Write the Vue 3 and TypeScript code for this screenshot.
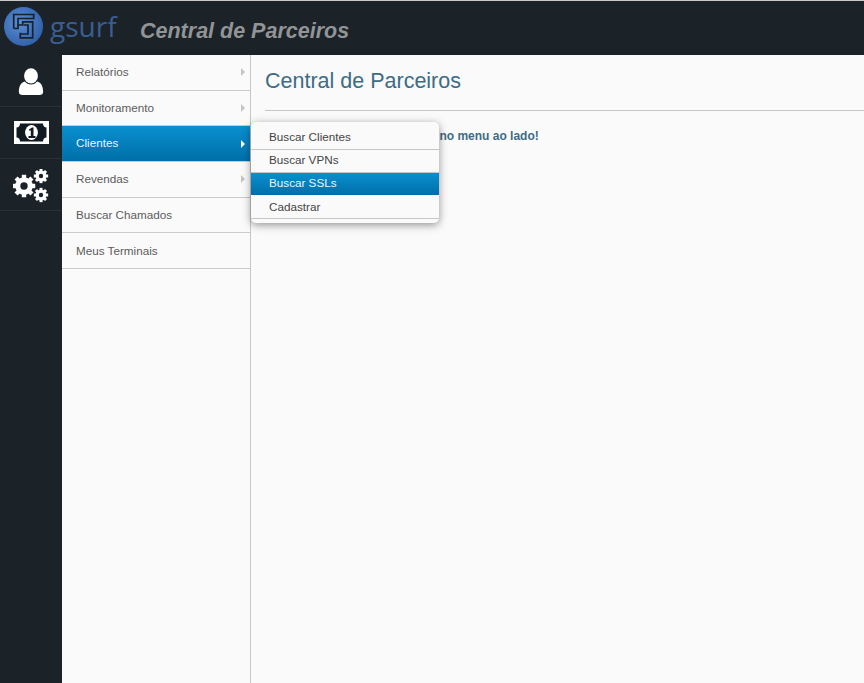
<script setup lang="ts">
const menu = [
  { label: 'Relatórios', arrow: true },
  { label: 'Monitoramento', arrow: true },
  { label: 'Clientes', arrow: true, active: true },
  { label: 'Revendas', arrow: true },
  { label: 'Buscar Chamados', arrow: false },
  { label: 'Meus Terminais', arrow: false },
]
const sub = [
  { label: 'Buscar Clientes' },
  { label: 'Buscar VPNs' },
  { label: 'Buscar SSLs', active: true },
  { label: 'Cadastrar' },
]
const gears = [
  { x: 11, y: 17, r: 8.8, hole: 3.7, w: 4.4, teeth: 8 },
  { x: 28, y: 7, r: 5.5, hole: 2.2, w: 3, teeth: 8 },
  { x: 28, y: 26, r: 5.5, hole: 2.2, w: 3, teeth: 8 },
]
function teeth(n: number) {
  return Array.from({ length: n }, (_, i) => (i * 360) / n)
}
</script>

<template>
  <div class="page">
    <header class="topbar">
      <svg class="logo" width="42" height="42" viewBox="0 0 42 42">
        <defs>
          <radialGradient id="ball" cx="40%" cy="40%" r="65%">
            <stop offset="0" stop-color="#5a8ed4" />
            <stop offset="1" stop-color="#3060a8" />
          </radialGradient>
        </defs>
        <circle cx="20.5" cy="20.5" r="19.5" fill="url(#ball)" />
        <g fill="none" stroke="#17222e" stroke-width="1.7">
          <path d="M10.7 22.5V8.5H30.7V12.5H15V19H19.7V15.8H29.7V31.8H17.3V26.8" />
          <path d="M10.7 22.5H15V19" />
          <path d="M20.7 19H25V28H17.3" />
        </g>
      </svg>
      <span class="brand">gsurf</span>
      <span class="app-title">Central de Parceiros</span>
    </header>

    <div class="body">
      <nav class="rail">
        <a class="rail-item user">
          <svg width="28" height="28" viewBox="0 0 28 30">
            <ellipse cx="14" cy="8.5" rx="7.4" ry="8.2" fill="#fff" />
            <path d="M1 25.5C1 20 3 15.5 7.5 14.5C9 16.5 11.2 17.6 14 17.6C16.8 17.6 19 16.5 20.5 14.5C25 15.5 27 20 27 25.5C27 28 25.5 29 23 29H5C2.5 29 1 28 1 25.5Z" fill="#fff" />
          </svg>
        </a>
        <a class="rail-item">
          <svg width="35" height="23" viewBox="0 0 35 23">
            <rect width="35" height="23" fill="#fff" />
            <path d="M6 2.5H29C29 5 30.5 6.5 32.5 6.5V16.5C30.5 16.5 29 18 29 20.5H6C6 18 4.5 16.5 2.5 16.5V6.5C4.5 6.5 6 5 6 2.5Z" fill="#111a20" />
            <ellipse cx="17.5" cy="11.5" rx="6.4" ry="7.6" fill="#fff" />
            <path d="M15 8.5L18 6.5H19.5V15H21.5V17H14.5V15H16.8V9.3L15.6 10Z" fill="#111a20" />
          </svg>
        </a>
        <a class="rail-item gears">
          <svg width="36" height="34" viewBox="0 0 36 34">
            <g v-for="(g, i) in gears" :key="i">
              <rect
                v-for="a in teeth(g.teeth)"
                :key="a"
                :x="g.x - g.w / 2"
                :y="g.y - g.r - g.w * 0.55"
                :width="g.w"
                :height="g.w * 1.1"
                fill="#fff"
                :transform="`rotate(${a} ${g.x} ${g.y})`"
              />
              <circle :cx="g.x" :cy="g.y" :r="(g.r + g.hole) / 2" fill="none" stroke="#fff" :stroke-width="g.r - g.hole" />
            </g>
          </svg>
        </a>
      </nav>

      <aside class="side">
        <ul class="menu">
          <li v-for="m in menu" :key="m.label" class="menu-item" :class="{ active: m.active }">
            <span>{{ m.label }}</span>
            <i v-if="m.arrow" class="caret"></i>
          </li>
        </ul>
      </aside>

      <main class="content">
        <h1>Central de Parceiros</h1>
        <hr />
        <p class="hint">Por favor, escolha uma opção no menu ao lado!</p>
      </main>

      <ul class="popup">
        <li v-for="s in sub" :key="s.label" :class="{ active: s.active }">{{ s.label }}</li>
      </ul>
    </div>
  </div>
</template>

<style>
html, body { margin: 0; background: #fafafa; }
</style>

<style scoped>
.page {
  width: 864px;
  height: 683px;
  display: flex;
  flex-direction: column;
  overflow: hidden;
  font-family: "Liberation Sans", Arial, sans-serif;
  background: #fafafa;
}
.topbar {
  height: 54px;
  flex: none;
  background: #1b2328;
  border-top: 1px solid #c9c9c9;
  display: flex;
  align-items: center;
  padding-left: 3px;
  box-sizing: content-box;
}
.logo { flex: none; margin-top: -3px; }
.brand {
  font-family: "Open Sans", sans-serif;
  font-weight: 400;
  font-size: 28px;
  line-height: 1;
  color: #3a5d94;
  margin: -5px 0 0 5px;
  width: 90px;
}
.app-title {
  font-size: 21.5px;
  font-weight: bold;
  font-style: italic;
  color: #929496;
  margin-top: 6px;
}
.body {
  flex: 1;
  display: flex;
  position: relative;
  min-height: 0;
}
.rail {
  width: 62px;
  flex: none;
  background: #1b2328;
}
.rail-item {
  display: flex;
  align-items: center;
  justify-content: center;
  height: 51px;
  border-bottom: 1px solid #2a3136;
  box-sizing: content-box;
}
.rail-item.user svg { margin-top: 2px; }
.rail-item.gears svg { margin-top: 2px; }
.side {
  width: 188px;
  flex: none;
  background: #fafafa;
  border-right: 1px solid #c6c6c6;
}
.menu { list-style: none; margin: 0; padding: 0; }
.menu-item {
  height: 34.7px;
  border-bottom: 1px solid #cbcbcb;
  box-sizing: content-box;
  display: flex;
  align-items: center;
  justify-content: space-between;
  padding: 0 5px 0 14px;
  font-size: 11.7px;
  color: #5c5c5c;
}
.menu-item span { margin-top: -1.4px; }
.menu-item.active span { margin-top: -3px; }
.menu-item.active {
  color: #e8f6ff;
  background: linear-gradient(#0a8fd0, #006fa8);
}
.caret {
  width: 0;
  height: 0;
  border-left: 4px solid #c4c4c4;
  border-top: 4px solid transparent;
  border-bottom: 4px solid transparent;
}
.active .caret { border-left-color: #fff; }
.content { flex: 1; padding: 0 0 0 14px; min-width: 0; }
h1 {
  margin: 13px 0 0;
  font-size: 21.5px;
  font-weight: 400;
  line-height: 26px;
  color: #3e6b85;
}
hr {
  margin: 16px 0 0;
  border: 0;
  border-top: 1px solid #c6c6c6;
}
.hint {
  margin: 18px 0 0;
  padding-left: 1px;
  font-size: 12px;
  line-height: 14px;
  font-weight: bold;
  color: #3e6b85;
}
.popup {
  position: absolute;
  left: 251px;
  top: 67px;
  width: 188px;
  height: 101px;
  box-sizing: border-box;
  list-style: none;
  margin: 0;
  padding: 5px 0 0;
  background: #fafafa;
  border-radius: 5px;
  box-shadow: 0 2px 8px rgba(0, 0, 0, 0.42);
}
.popup li {
  height: 22px;
  line-height: 20px;
  padding-left: 18px;
  font-size: 11.7px;
  color: #444;
  border-bottom: 1px solid #c6c6c6;
  box-sizing: content-box;
}
.popup li:last-child { line-height: 22px; }
.popup li.active {
  color: #e8f6ff;
  background: linear-gradient(#0a8fd0, #006fa8);
  border-bottom-color: #fafafa;
}
</style>
